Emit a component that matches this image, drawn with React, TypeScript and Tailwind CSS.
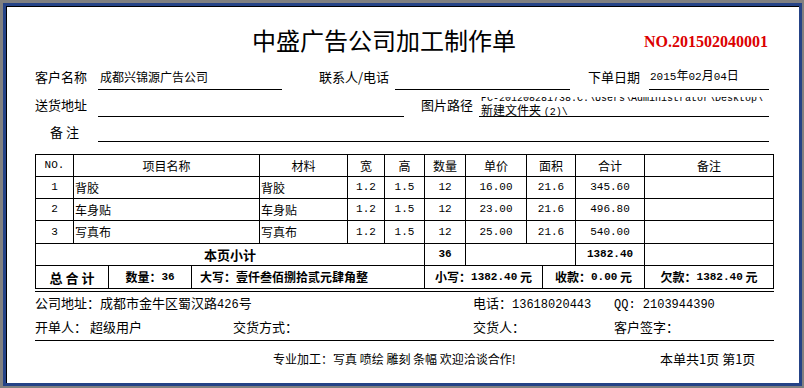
import React from 'react';

const cjk = "font-['Noto_Sans_CJK_SC',sans-serif]";
const mono = "font-['Liberation_Mono','Noto_Sans_CJK_SC',monospace]";

const N: React.FC<{ children: React.ReactNode; className?: string }> = ({ children, className = '' }) => (
  <span className={`${mono} text-[11px] ${className}`}>{children}</span>
);

const items = [
  { no: '1', name: '背胶', material: '背胶', w: '1.2', h: '1.5', qty: '12', price: '16.00', area: '21.6', total: '345.60' },
  { no: '2', name: '车身贴', material: '车身贴', w: '1.2', h: '1.5', qty: '12', price: '23.00', area: '21.6', total: '496.80' },
  { no: '3', name: '写真布', material: '写真布', w: '1.2', h: '1.5', qty: '12', price: '25.00', area: '21.6', total: '540.00' },
];

const cols = 'grid grid-cols-[38px_186px_88px_37px_40px_41px_61px_49px_69px_129px]';
const cell = 'h-full flex items-center justify-center border-r border-black';

const App: React.FC = () => {
  return (
    <div className={`w-[804px] h-[388px] bg-[#808080] pt-[3px] pl-[3px] pr-[2px] pb-[2px] text-black ${cjk}`}>
      <div className="h-full border-[3px] border-[#254387]">
        <div className="h-full bg-white border-t border-l border-black pl-[28px] overflow-hidden">
          {/* title */}
          <div className="flex items-center h-[28px] mt-[19px]">
            <div className="w-[609px] pl-[217px] text-[24px] leading-[28px]">中盛广告公司加工制作单</div>
            <div className="font-['Liberation_Serif',serif] font-bold text-[16px] text-[#dc0000] pt-[3px]">NO.201502040001</div>
          </div>

          {/* info rows */}
          <div className="flex items-end mt-[13px] leading-[16px]">
            <div className="w-[63px] text-[13px] pb-[5px]">客户名称</div>
            <div className="w-[184px] text-[12px] pl-[2px] pb-[4px] border-b border-black">成都兴锦源广告公司</div>
            <div className="w-[37px]" />
            <div className="w-[76px] text-[13px] pb-[5px]">联系人/电话</div>
            <div className="w-[175px] pb-[4px] border-b border-black h-[21px]" />
            <div className="w-[18px]" />
            <div className="w-[61px] text-[13px] pb-[5px]">下单日期</div>
            <div className="w-[120px] text-[12px] pl-[1px] pb-[4px] border-b border-black">
              <N>2015</N>年<N>02</N>月<N>04</N>日
            </div>
          </div>

          <div className="flex items-end mt-[5px] leading-[16px]">
            <div className="w-[63px] text-[13px] pb-[4px]">送货地址</div>
            <div className="w-[306px] h-[22px] border-b border-black" />
            <div className="w-[17px]" />
            <div className="w-[58px] text-[13px] pb-[4px]">图片路径</div>
            <div className="w-[290px] h-[20px] pl-[2px] pb-[1px] border-b border-black overflow-hidden flex flex-col justify-end">
              <div className={`${mono} text-[10px] leading-[11px] h-[11px] shrink-0 whitespace-nowrap`}>PC-201208281738:C:\Users\Administrator\Desktop\</div>
              <div className="text-[12px] leading-[11px] h-[11px] shrink-0 whitespace-nowrap">新建文件夹 <span className={`${mono} text-[10px]`}>(2)\</span></div>
            </div>
          </div>

          <div className="flex items-end mt-[7px] leading-[16px]">
            <div className="w-[63px] text-[13px] pl-[15px] pb-[2px]">备 注</div>
            <div className="w-[671px] h-[18px] border-b border-black" />
          </div>

          {/* table */}
          <div className="w-[739px] mt-[12px] border-t border-l border-black text-[12px] leading-none">
            <div className={`${cols} h-[22px] border-b border-black`}>
              <div className={cell}><N>NO.</N></div>
              <div className={cell}>项目名称</div>
              <div className={cell}>材料</div>
              <div className={cell}>宽</div>
              <div className={cell}>高</div>
              <div className={cell}>数量</div>
              <div className={cell}>单价</div>
              <div className={cell}>面积</div>
              <div className={cell}>合计</div>
              <div className={cell}>备注</div>
            </div>
            {items.map((it, i) => (
              <div key={it.no} className={`${cols} ${i === 2 ? 'h-[23px]' : 'h-[22px]'} border-b border-black`}>
                <div className={cell}><N>{it.no}</N></div>
                <div className={`${cell} justify-start pl-[1px]`}>{it.name}</div>
                <div className={`${cell} justify-start pl-[1px]`}>{it.material}</div>
                <div className={cell}><N>{it.w}</N></div>
                <div className={cell}><N>{it.h}</N></div>
                <div className={cell}><N>{it.qty}</N></div>
                <div className={cell}><N>{it.price}</N></div>
                <div className={cell}><N>{it.area}</N></div>
                <div className={cell}><N>{it.total}</N></div>
                <div className={cell} />
              </div>
            ))}
            <div className="grid grid-cols-[389px_41px_110px_69px_129px] h-[22px] border-b border-black font-bold">
              <div className={`${cell} text-[13px]`}>本页小计</div>
              <div className={cell}><N className="font-bold">36</N></div>
              <div className={cell} />
              <div className={cell}><N className="font-bold">1382.40</N></div>
              <div className={cell} />
            </div>
            <div className="grid grid-cols-[73px_83px_233px_118px_102px_129px] h-[23px] border-b border-black font-bold text-[12px]">
              <div className={`${cell} text-[13px]`}>总 合 计</div>
              <div className={cell}>数量：<N className="font-bold">36</N></div>
              <div className={`${cell} justify-start pl-[8px]`}>大写：壹仟叁佰捌拾贰元肆角整</div>
              <div className={cell}>小写：<N className="font-bold">1382.40</N>&nbsp;元</div>
              <div className={cell}>收款：<N className="font-bold">0.00</N>&nbsp;元</div>
              <div className={cell}>欠款：<N className="font-bold">1382.40</N>&nbsp;元</div>
            </div>
          </div>
          <div className="w-[739px] h-px bg-black mt-[2px]" />

          {/* footer */}
          <div className="grid grid-cols-[198px_240px_141px_160px] text-[13px] leading-[16px] mt-[3px]">
            <div className="col-span-2">公司地址：成都市金牛区蜀汉路<N className="text-[12px]">426</N>号</div>
            <div>电话：<N className="text-[12px]">13618020443</N></div>
            <div><N className="text-[12px]">QQ: 2103944390</N></div>
          </div>
          <div className="grid grid-cols-[198px_240px_141px_160px] text-[13px] leading-[16px] mt-[6px]">
            <div>开单人： 超级用户</div>
            <div>交货方式：</div>
            <div>交货人：</div>
            <div>客户签字：</div>
          </div>
          <div className="w-[739px] h-px bg-black mt-[5px]" />
          <div className="flex leading-[16px] mt-[10px]">
            <div className="w-[625px] pl-[238px] text-[12px] whitespace-nowrap">专业加工：写真 喷绘 雕刻 条幅 欢迎洽谈合作!</div>
            <div className="text-[13px] whitespace-nowrap">本单共1页 第1页</div>
          </div>
        </div>
      </div>
    </div>
  );
};

export default App;
